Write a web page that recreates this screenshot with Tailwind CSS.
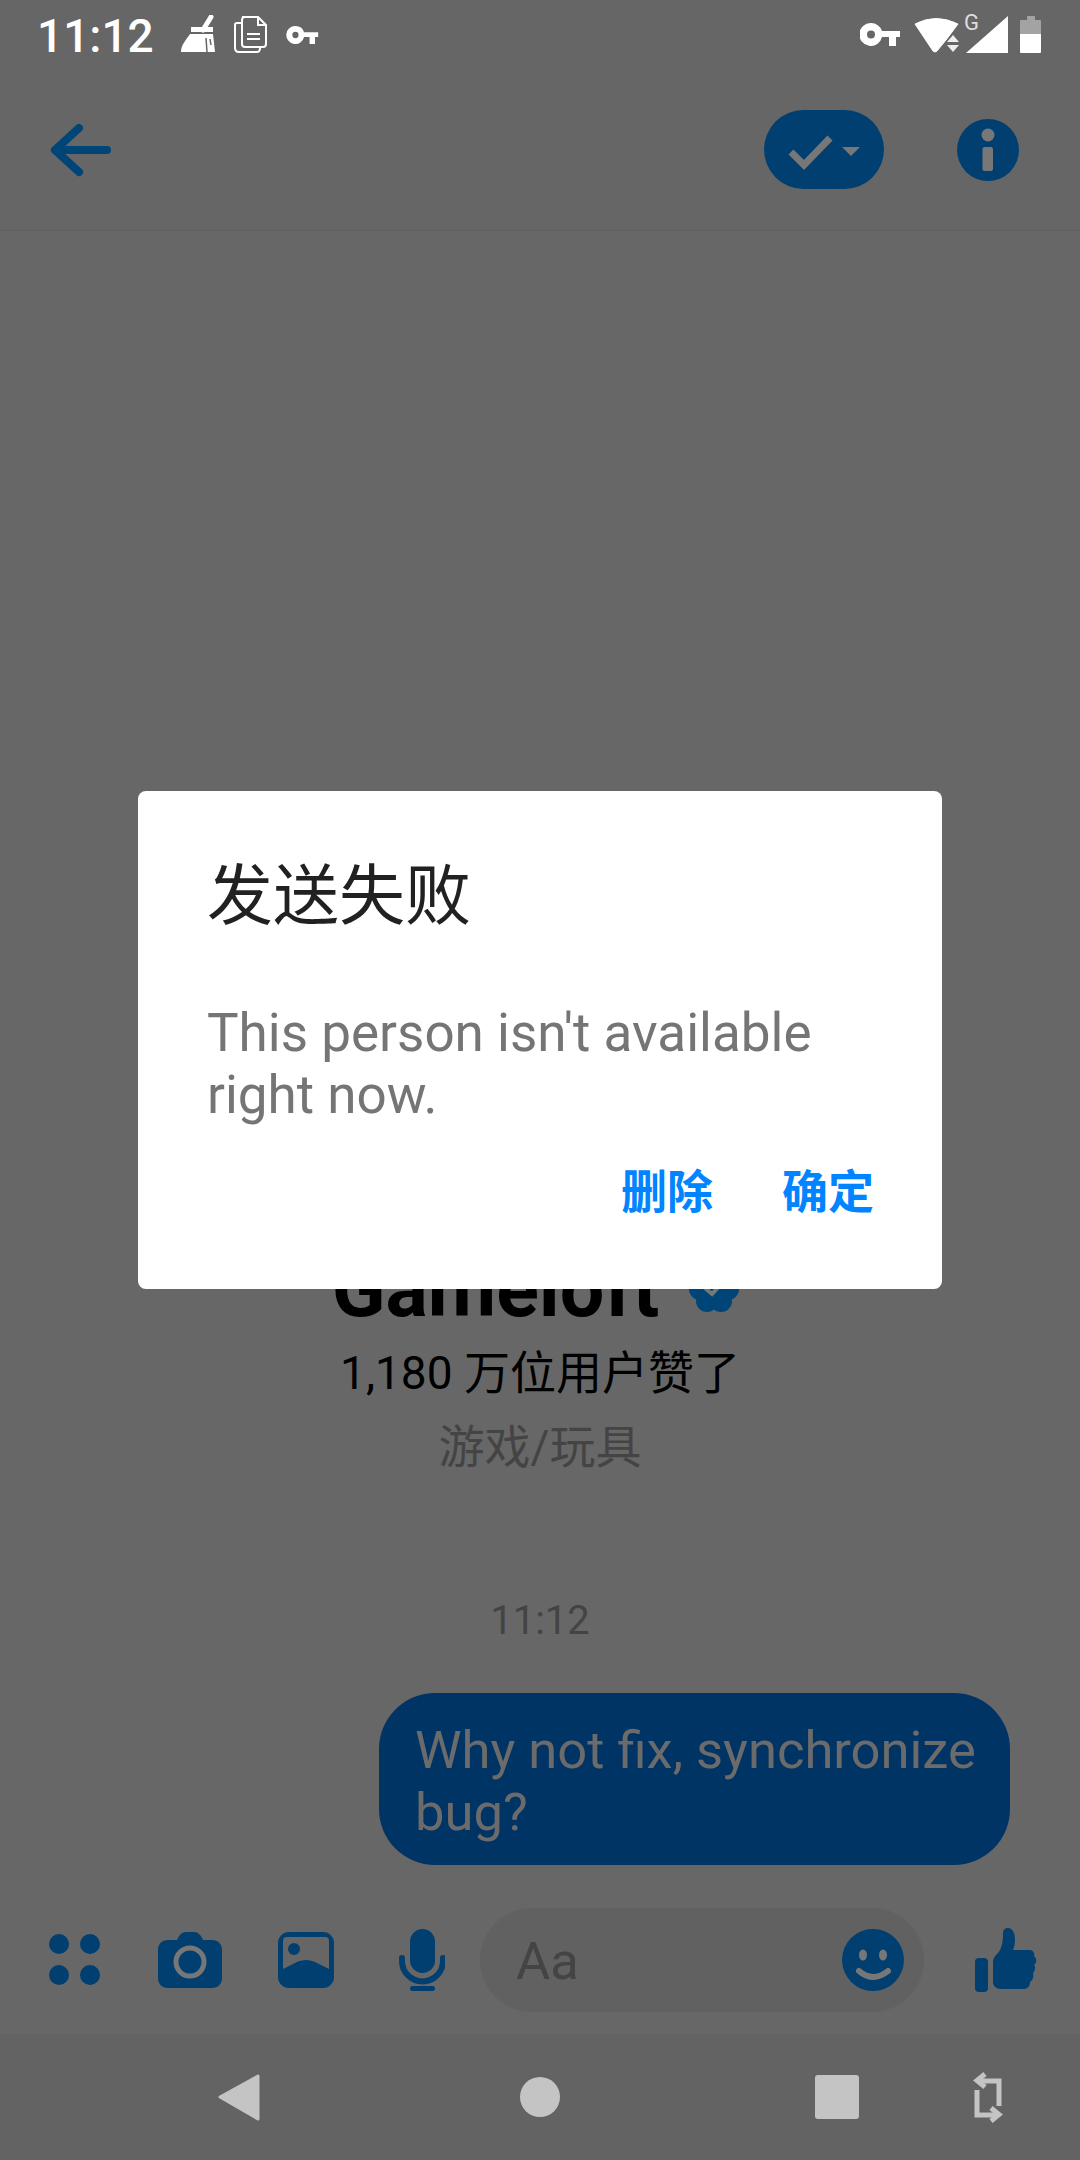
<!DOCTYPE html>
<html lang="zh-CN">
<head>
  <meta charset="UTF-8">
  <title>Messenger</title>
  <script src="https://cdn.jsdelivr.net/npm/@tailwindcss/browser@4"></script>
</head>
<body class="m-0">
  <div class="relative w-[1080px] h-[2160px] flex flex-col overflow-hidden bg-[#676767] font-['Roboto','Noto_Sans_CJK_SC',sans-serif]">

    <!-- status bar -->
    <div class="h-[64px] shrink-0 flex items-start bg-[#666666] text-white">
      <span class="ml-[37px] mt-[9px] text-[46px] leading-[54px] font-medium">11:12</span>
      <svg class="ml-[26px] mt-[15px]" width="36" height="38" viewBox="0 0 36 38" fill="white"><path d="M31 2 L23 15" stroke="white" stroke-width="5" stroke-linecap="round"/><path d="M11 12 H33 V17 H11Z"/><path d="M10 19 H33 L35 37 H1 C1 30 6 25 10 19Z"/><path d="M26 23 L27 37 M30 24 L31 30" stroke="#666666" stroke-width="1.500"/></svg>
      <svg class="ml-[17px] mt-[15px]" width="34" height="38" viewBox="0 0 34 38" fill="none" stroke="white" stroke-width="2"><path d="M9 2 H25 L33 10 V29 Q33 32 30 32 H12 Q9 32 9 29 V5 Q9 2 12 2Z"/><path d="M25 2 V10 H33"/><path d="M9 8 H4 Q2 8 2 10 V33 Q2 37 6 37 H24 Q27 37 27 33"/><path d="M14 19 H27 M14 24 H27"/></svg>
      <svg class="ml-[18px] mt-[26px]" width="35" height="18" viewBox="0 0 40 23" fill="white"><path fill-rule="evenodd" d="M11 0 A11.500 11.500 0 0 1 22 8 H40 V14 H36 V23 H29 V14 H22 A11.500 11.500 0 1 1 11 0Z M11 7.500 A4 4 0 1 0 11 15.500 A4 4 0 1 0 11 7.500Z"/></svg>
      <div class="flex-1"></div>
      <svg class="mt-[23px]" width="40" height="23" viewBox="0 0 40 23" fill="white"><path fill-rule="evenodd" d="M11 0 A11.500 11.500 0 0 1 22 8 H40 V14 H36 V23 H29 V14 H22 A11.500 11.500 0 1 1 11 0Z M11 7.500 A4 4 0 1 0 11 15.500 A4 4 0 1 0 11 7.500Z"/></svg>
      <svg class="ml-[14px] mt-[6px]" width="68" height="48" viewBox="0 0 68 48" fill="white"><path d="M1 18 Q22 7 44 18 L32 34 L23 45 Q21 47 19 45Z" stroke="white" stroke-linejoin="round"/><path d="M39 29 L33 36 H45Z M33 39 H45 L39 46Z" fill="#eeeeee"/><text x="50" y="24" font-size="22" fill="#dddddd" font-family="Roboto">G</text></svg>
      <svg class="-ml-[16px] mt-[16px]" width="42" height="37" viewBox="0 0 42 37" fill="white"><path d="M0 37 H42 V0Z"/></svg>
      <div class="ml-[12px] mt-[16px] w-[21px] h-[37px] flex flex-col items-center">
        <div class="w-[8px] h-[4px] rounded-t-[1px] bg-[#a3a3a3]"></div>
        <div class="w-full h-[14px] rounded-t-[1px] bg-[#a3a3a3]"></div>
        <div class="w-full flex-1 rounded-b-[1px] bg-white"></div>
      </div>
      <div class="w-[39px]"></div>
    </div>

    <!-- toolbar -->
    <div class="h-[167px] shrink-0 flex items-center pt-[6px] bg-[#666666] border-b-2 border-[#616161]">
      <svg class="ml-[46px]" width="70" height="64" viewBox="0 0 70 64" fill="none" stroke="#004578" stroke-width="8" stroke-linecap="round" stroke-linejoin="round"><path d="M61 32 H9 M33 10 L9 32 L33 54"/></svg>
      <div class="flex-1"></div>
      <div class="w-[120px] h-[79px] rounded-full bg-[#003f70]">
        <svg width="120" height="79" viewBox="0 0 120 79" fill="none"><path d="M27 42 L40 55 L66 28" stroke="#777777" stroke-width="7"/><path d="M78 37 H96 L87 46Z" fill="#777777"/></svg>
      </div>
      <svg class="ml-[73px] mr-[61px]" width="62" height="62" viewBox="0 0 62 62"><circle cx="31" cy="31" r="31" fill="#003f70"/><circle cx="31" cy="16" r="6.500" fill="#777777"/><rect x="25.500" y="28" width="10.500" height="24" rx="2" fill="#777777"/></svg>
    </div>

    <!-- conversation -->
    <div class="flex-1 flex flex-col items-center justify-end pb-[20px]">
      <div class="flex items-center gap-[30px] text-[79px] font-bold text-black">
        <span class="leading-[76px] pb-[8px]">Gameloft</span>
        <svg class="mb-[8px] mr-[9px]" width="50" height="46" viewBox="0 0 50 46" fill="#004578"><circle cx="25" cy="23" r="15"/><circle cx="11" cy="23" r="11"/><circle cx="39" cy="23" r="11"/><circle cx="18" cy="11" r="11"/><circle cx="32" cy="11" r="11"/><circle cx="18" cy="35" r="11"/><circle cx="32" cy="35" r="11"/><path d="M16 22 L23 28 L34 16" fill="none" stroke="#777777" stroke-width="4"/></svg>
      </div>
      <div class="mt-[8px] text-[46px] leading-[60px] text-black">1,180 万位用户赞了</div>
      <div class="mt-[14px] text-[46px] leading-[60px] text-[#444444]">游戏/玩具</div>
      <div class="mt-[120px] text-[40px] leading-[48px] text-[#444444]">11:12</div>
      <div class="self-end mr-[70px] mt-[48px] w-[631px] rounded-[56px] bg-[#003465] pl-[36px] pt-[26px] pb-[22px] text-[52.5px] leading-[62px] text-[#6b6b6b]">Why not fix, synchronize<br>bug?</div>
    </div>

    <!-- composer -->
    <div class="h-[149px] shrink-0 flex items-center">
      <svg class="ml-[49px]" width="51" height="51" viewBox="0 0 51 51" fill="#003f70"><circle cx="10" cy="10" r="10"/><circle cx="41" cy="10" r="10"/><circle cx="10" cy="41" r="10"/><circle cx="41" cy="41" r="10"/></svg>
      <svg class="ml-[58px]" width="64" height="56" viewBox="0 0 64 56"><path d="M10 8 H19 C21 3 24 0 28 0 H36 C40 0 43 3 45 8 H54 C60 8 64 12 64 18 V46 C64 52 60 56 54 56 H10 C4 56 0 52 0 46 V18 C0 12 4 8 10 8Z" fill="#003f70"/><circle cx="32" cy="30" r="14" fill="#003f70" stroke="#777777" stroke-width="5"/></svg>
      <svg class="ml-[56px]" width="56" height="56" viewBox="0 0 56 56"><rect width="56" height="56" rx="11" fill="#003f70"/><path d="M5 9 a4 4 0 0 1 4 -4 h38 a4 4 0 0 1 4 4 v28 L36 29.500 Q28 26.500 20 29.500 L5 37Z" fill="#666666"/><circle cx="16" cy="17" r="6" fill="#003f70"/></svg>
      <svg class="ml-[65px]" width="46" height="62" viewBox="0 0 46 62" fill="#003f70"><rect x="11" y="0" width="25" height="44" rx="12.500"/><path d="M3 29 V32 A20.500 20.500 0 0 0 44 32 V29" fill="none" stroke="#003f70" stroke-width="6" stroke-linecap="round"/><rect x="11" y="57" width="25" height="5" rx="2.500"/></svg>
      <div class="ml-[35px] w-[444px] h-[104px] rounded-full bg-[#616161] flex items-center pl-[36px] pr-[20px]">
        <span class="text-[52.5px] leading-[62px] mt-[2px] text-[#444444]">Aa</span>
        <div class="flex-1"></div>
        <svg width="62" height="62" viewBox="0 0 62 62"><circle cx="31" cy="31" r="31" fill="#003f70"/><ellipse cx="21" cy="26" rx="4" ry="5.500" fill="#777777"/><ellipse cx="41" cy="26" rx="4" ry="5.500" fill="#777777"/><path d="M17 42 Q31 54 46 42" fill="none" stroke="#777777" stroke-width="6" stroke-linecap="round"/></svg>
      </div>
      <svg class="ml-[51px]" width="62" height="64" viewBox="0 0 62 64" fill="#003f70"><rect x="0" y="30" width="13" height="34" rx="4"/><path d="M18 34 C18 30 20 28 23 25 C27 20 28 14 28 5 C28 2 30 0 33 0 C38 0 40 6 40 12 C40 16 39 19 38 22 H54 C58 22 60 25 59 28 C62 30 62 35 59 37 C61 39 60 43 58 45 C59 49 58 52 55 54 C55 59 52 61 48 61 H26 C21 61 18 58 18 54Z"/></svg>
    </div>

    <!-- nav bar -->
    <div class="h-[126px] shrink-0 relative bg-[#636363]">
      <svg class="absolute left-[216px] top-[38px]" width="46" height="52" viewBox="0 0 46 52"><path d="M42 4 V47 L4 25Z" fill="#c4c4c4" stroke="#c4c4c4" stroke-width="3" stroke-linejoin="round"/></svg>
      <div class="absolute left-[520px] top-[43px] w-[40px] h-[40px] rounded-full bg-[#c4c4c4]"></div>
      <div class="absolute left-[815px] top-[41px] w-[44px] h-[44px] rounded-[3px] bg-[#c4c4c4]"></div>
      <svg class="absolute left-[970px] top-[36px]" width="36" height="54" viewBox="0 0 36 54" fill="none" stroke="#c4c4c4" stroke-width="5"><path d="M29 36 V11 H10"/><path d="M15 4 L7 10.500 L15 17"/><path d="M7 20 V45 H26"/><path d="M21 38 L29 44.500 L21 51"/></svg>
    </div>

    <!-- dialog -->
    <div class="absolute left-[138px] top-[791px] w-[804px] h-[498px] rounded-[8px] bg-white pl-[69px] pr-[68px] flex flex-col">
      <div class="mt-[66px] text-[66px] leading-[80px] text-[#212121]">发送失败</div>
      <div class="mt-[65px] text-[53px] leading-[62px] text-[#757575]">This person isn't available<br>right now.</div>
      <div class="mt-[36px] flex justify-end gap-[69px] text-[46px] leading-[60px] font-bold text-[#0084ff]">
        <span>删除</span>
        <span>确定</span>
      </div>
    </div>
  </div>
</body>
</html>
